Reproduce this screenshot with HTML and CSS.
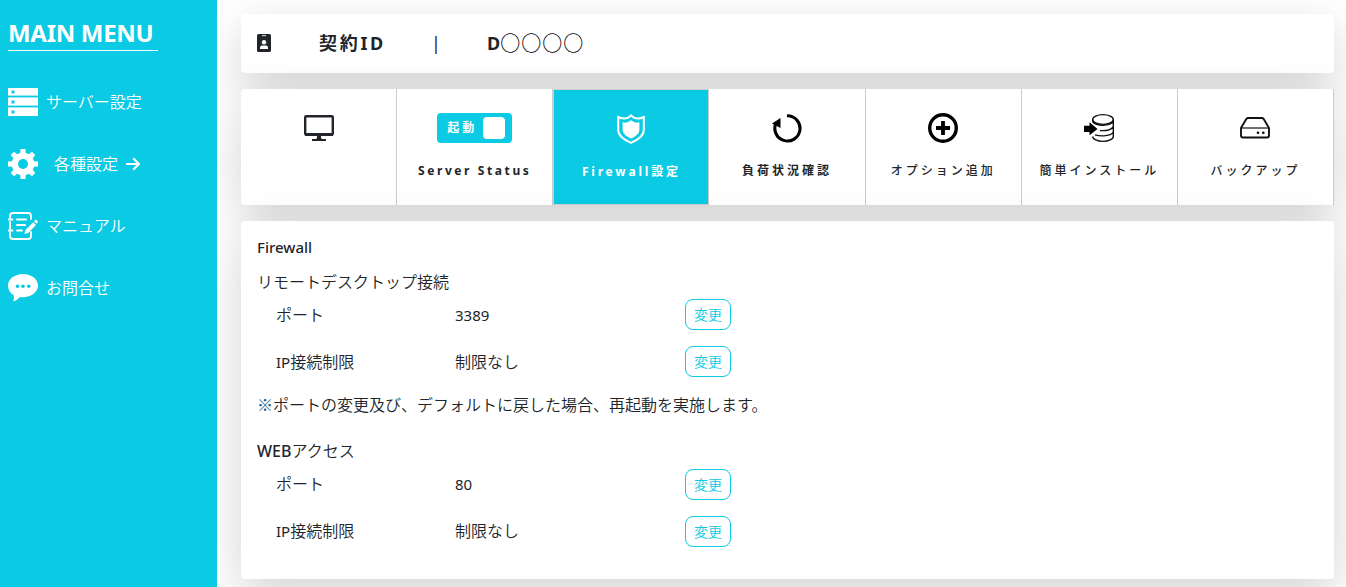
FILE: index.html
```html
<!DOCTYPE html>
<html lang="ja">
<head>
<meta charset="utf-8">
<title>Firewall設定</title>
<link rel="stylesheet" href="styles.css">
</head>
<body>
<div class="layout">
  <aside class="sidebar">
    <h1 class="menu-title">MAIN MENU</h1>
    <ul class="menu">
      <li class="menu-item">
        <svg class="menu-icon" viewBox="0 0 30 30"><path fill="#fff" d="M0 1h30v7H0zM0 11h30v7H0zM0 21h30v8H0z"/><path fill="#fff" opacity=".6" d="M0 8h30v1H0zM0 10h30v1H0zM0 18h30v1H0zM0 20h30v1H0z"/><path fill="#0acae4" d="M3.500 3.500h3v3h-3zM3.500 13.500h3v3h-3zM3.500 23.500h3v3h-3z"/></svg>
        <span class="menu-text">サーバー設定</span>
      </li>
      <li class="menu-item menu-item-wide">
        <svg class="menu-icon" viewBox="0 0 30 30"><g fill="#fff"><path d="M12.200 5 12.600 0h4.800l.4 5v20l-.4 5h-4.800l-.4-5z"/><path d="M12.200 5 12.600 0h4.800l.4 5v20l-.4 5h-4.800l-.4-5z" transform="rotate(45 15 15)"/><path d="M12.200 5 12.600 0h4.800l.4 5v20l-.4 5h-4.800l-.4-5z" transform="rotate(90 15 15)"/><path d="M12.200 5 12.600 0h4.800l.4 5v20l-.4 5h-4.800l-.4-5z" transform="rotate(135 15 15)"/><circle cx="15" cy="15" r="11.300"/></g><circle cx="15" cy="15" r="5" fill="#0acae4"/></svg>
        <span class="menu-text">各種設定</span>
        <svg class="menu-arrow" viewBox="0 0 14 14"><path d="M0 7h13M7.200 1.200 13 7l-5.800 5.800" fill="none" stroke="#fff" stroke-width="2.200"/></svg>
      </li>
      <li class="menu-item">
        <svg class="menu-icon" viewBox="0 0 30 30"><g fill="none" stroke="#fff" stroke-width="1.900" stroke-linecap="round"><path d="M2 6.500V5q0-3 3-3h15q3 0 3 3v3M2 11v6.500M2 21.500V25q0 3 3 3h15q3 0 3-3v-4M0.500 8.500h4M0.500 19.500h4M9 8.500h9M9 14h8M9 19.500h5"/></g><path fill="#fff" d="m17.500 19 7.700-7.700 2.800 2.800-7.800 7.800-3.900 1zM26 10.300l1.200-1.300q1-.5 2 .4t.4 2L28.500 12.700z"/></svg>
        <span class="menu-text">マニュアル</span>
      </li>
      <li class="menu-item">
        <svg class="menu-icon" viewBox="0 0 30 30"><path fill="#fff" d="M15 1c8.300 0 15 5 15 11.600S23.300 24.300 15 24.300c-1 0-2-.1-3-.2-2.200 2.400-4.500 3.800-6.800 4.400.8-2 .9-4 .4-6.200C2.200 20.200 0 16.800 0 12.600 0 6 6.700 1 15 1z"/><g fill="#0acae4"><circle cx="9.500" cy="13.300" r="1.800"/><circle cx="15" cy="13.300" r="1.800"/><circle cx="20.800" cy="13.300" r="1.800"/></g></svg>
        <span class="menu-text">お問合せ</span>
      </li>
    </ul>
  </aside>

  <main class="main">
    <header class="card contract">
      <svg class="badge-icon" viewBox="0 0 14 18"><rect width="14" height="18" rx="1.600" fill="#212529"/><path stroke="#fff" stroke-width=".9" d="M5 1.700h4"/><circle cx="7" cy="8.200" r="2.200" fill="#fff"/><path fill="#fff" d="M3 15v-1.300Q3 11.500 5 11.500h4q2 0 2 2.200V15z"/></svg>
      <span class="contract-label">契約ID</span>
      <span class="contract-sep">|</span>
      <span class="contract-id">D<span class="mask">○○○○</span></span>
    </header>

    <nav class="card tabs">
      <div class="tab">
        <svg class="tab-icon" viewBox="0 0 30 30"><rect x="1.200" y="3.200" width="27.600" height="18.400" rx="1" fill="none" stroke="#212529" stroke-width="2.400"/><path fill="#212529" d="M1 20h28v3H1zM13 22h4v3l1 1h4v2H8v-2h4l1-1z"/></svg>
      </div>
      <div class="tab">
        <div class="toggle"><span class="toggle-text">起動</span><span class="toggle-knob"></span></div>
        <span class="tab-label label-status">Server Status</span>
      </div>
      <div class="tab tab-active">
        <svg class="tab-icon shield" viewBox="0 0 30 30"><path fill="none" stroke="#fff" stroke-width="2" d="M15 1.300Q18 4.600 22 4.500q2.800 0 5.800-1.500v13q0 4-3.600 7.200Q20.500 26.500 15 28.900 9.500 26.500 5.800 23.200 2.200 20 2.200 16V3q3 1.500 5.800 1.500Q12 4.600 15 1.300z"/><path fill="#fff" d="M15 6.200q2.900 2.400 5.800 2.500 1.300 0 2.600-.4V16q0 2.700-2.600 4.900T15 24.600q-3.200-1.500-5.800-3.700T6.600 16V8.300q1.300.4 2.600.4Q12.100 8.600 15 6.200z"/></svg>
        <span class="tab-label label-firewall">Firewall設定</span>
      </div>
      <div class="tab">
        <svg class="tab-icon" viewBox="0 0 30 30"><path fill="none" stroke="#000" stroke-width="3.100" d="M15 2.800A12.600 12.600 0 1 1 4.300 9.500"/><path d="M0 10.500 8.500 5v10z"/></svg>
        <span class="tab-label">負荷状況確認</span>
      </div>
      <div class="tab">
        <svg class="tab-icon" viewBox="0 0 30 30"><circle cx="15" cy="15" r="13.300" fill="none" stroke="#000" stroke-width="3.400"/><path stroke="#000" stroke-width="3.800" d="M15 8v14M8 15h14"/></svg>
        <span class="tab-label label-kana">オプション追加</span>
      </div>
      <div class="tab">
        <svg class="tab-icon" viewBox="0 0 30 30"><g fill="none" stroke="#111" stroke-width="1.400"><ellipse cx="19" cy="6.500" rx="10.300" ry="4.900"/><path d="M29.300 6.500v17c0 2.700-4.600 4.900-10.300 4.900S8.700 26.200 8.700 23.500M8.700 6.500v2.200c1.600 2 5.600 3.500 10.300 3.500s9-1.500 10.300-4M16 17.600c7 .4 12-1.400 13.300-4M11 21.800c6 1.800 16 1.400 18.300-2.800"/></g><path d="M0 12.700h5.500V9.300l8 6.700-8 6.300V19H0z"/></svg>
        <span class="tab-label label-kana">簡単インストール</span>
      </div>
      <div class="tab">
        <svg class="tab-icon" viewBox="0 0 30 30"><g fill="none" stroke="#111" stroke-width="1.900" stroke-linejoin="round"><path d="M1 15 6.300 6Q7 5 8.300 5h13.400q1.300 0 2 1L29 15v7.500q0 2-2 2H3q-2 0-2-2z"/><path stroke-width="1.200" d="M1 15h28"/></g><circle cx="18" cy="19.700" r="1.300"/><circle cx="23.300" cy="19.700" r="1.300"/></svg>
        <span class="tab-label label-kana">バックアップ</span>
      </div>
    </nav>

    <section class="card content">
      <h2 class="heading heading-firewall">Firewall</h2>
      <h3 class="heading heading-sub">リモートデスクトップ接続</h3>
      <div class="row"><span>ポート</span><span class="num">3389</span><button class="change">変更</button></div>
      <div class="row"><span><span class="latin">IP</span>接続制限</span><span>制限なし</span><button class="change">変更</button></div>
      <p class="note"><span class="mark">※</span>ポートの変更及び、デフォルトに戻した場合、再起動を実施します。</p>
      <h3 class="heading heading-web"><span class="latin">WEB</span>アクセス</h3>
      <div class="row row-web"><span>ポート</span><span class="num">80</span><button class="change">変更</button></div>
      <div class="row row-web"><span><span class="latin">IP</span>接続制限</span><span>制限なし</span><button class="change">変更</button></div>
    </section>
  </main>
</div>
</body>
</html>
```
FILE: styles.css
```css
* { box-sizing: border-box; }

body {
  margin: 0;
  overflow: hidden;
  background: #fff;
  color: #212529;
  font-family: "Noto Sans", "Noto Sans CJK JP", sans-serif;
  font-size: 16px;
  line-height: 24px;
}

h1, h2, h3, p, ul { margin: 0; padding: 0; }

svg { display: block; flex: none; }

.layout { display: flex; height: 587px; }

.sidebar {
  position: relative;
  z-index: 1;
  flex: none;
  width: 217px;
  padding: 17px 8px;
  background: #0acae4;
  color: #fff;
}

.menu-title {
  width: 150px;
  height: 34px;
  border-bottom: 1px solid #fff;
  font-size: 24px;
  font-weight: 700;
  line-height: 32px;
  letter-spacing: -.3px;
  white-space: nowrap;
}

.menu {
  display: flex;
  flex-direction: column;
  gap: 32px;
  margin-top: 36px;
  list-style: none;
}

.menu-item {
  display: flex;
  align-items: center;
  gap: 8px;
  height: 30px;
  font-family: "Noto Sans CJK JP", sans-serif;
  font-weight: 350;
}

.menu-item-wide { gap: 16px; }
.menu-icon { width: 30px; height: 30px; }
.menu-text { padding-bottom: 2px; }
.menu-arrow { width: 14px; height: 14px; margin-left: -8px; }

.main {
  display: flex;
  flex: 1;
  flex-direction: column;
  gap: 16px;
  padding: 14px 12px 8px 24px;
}

.card {
  flex: none;
  border-radius: 4px;
  background: #fff;
  box-shadow: 0 16px 48px rgba(0, 0, 0, .175);
}

.contract {
  display: flex;
  align-items: center;
  height: 59px;
  padding: 0 16px;
  font-size: 18px;
  font-weight: 700;
  white-space: nowrap;
}

.badge-icon { width: 14px; height: 18px; margin-bottom: 1px; }
.contract-label, .contract-sep, .contract-id { padding-bottom: 2px; }
.contract-label { width: 112px; margin-left: 48px; letter-spacing: 2.700px; }
.contract-sep { width: 56px; font-weight: 400; }
.mask {
  color: #000;
  font-family: "Noto Sans CJK JP", sans-serif;
  font-size: 20px;
  font-weight: 500;
  line-height: 20px;
  letter-spacing: 1px;
  vertical-align: -1px;
}

.tabs {
  display: grid;
  grid-template-columns: repeat(7, 1fr);
  height: 116px;
}

.tab {
  display: flex;
  flex-direction: column;
  align-items: center;
  padding-top: 24px;
  border-right: 1px solid #ccc;
}

.tab-active {
  padding-top: 23px;
  border: 1px solid #ccc;
  background: #0acae4;
  color: #fff;
}

.tab-icon { width: 30px; height: 30px; }
.shield { margin-top: 1px; }

.tab-label {
  margin-top: 18px;
  font-size: 12px;
  font-weight: 700;
  line-height: 20px;
  letter-spacing: 3px;
  white-space: nowrap;
}

.label-status { letter-spacing: 2.600px; }
.label-firewall { letter-spacing: 2.800px; }
.label-kana { font-weight: 500; }

.toggle {
  display: flex;
  align-items: center;
  justify-content: space-between;
  width: 75px;
  height: 30px;
  padding: 0 7px 0 10px;
  border-radius: 4px;
  background: #0acae4;
  color: #fff;
}

.toggle-text { font-size: 12px; font-weight: 700; letter-spacing: 3px; }
.toggle-knob { width: 22px; height: 22px; border-radius: 4px; background: #fff; }

.content {
  height: 358px;
  padding: 14px 16px;
  font-weight: 350;
}

.heading { font-size: 16px; font-weight: 350; line-height: 24px; }
.heading-firewall { font-size: 15px; font-weight: 500; }
.heading-sub { margin: 11px 0 5px; }
.heading-web { margin: 22px 0 6px; }
.heading-web .latin { font-size: 16px; font-weight: 500; }

.latin, .num { font-size: 15px; font-weight: 400; }

.row {
  display: grid;
  grid-template-columns: 179px 230px 46px;
  align-items: center;
  height: 31px;
  margin-bottom: 16px;
  padding-left: 19px;
}

.row-web > span { padding-bottom: 2px; }

.note { margin-top: -1px; white-space: nowrap; }
.mark { color: #0b5a94; font-family: "Noto Sans CJK JP", sans-serif; }

.change {
  height: 31px;
  padding: 0;
  border: 1px solid #0acae4;
  border-radius: 8px;
  background: #fff;
  color: #0acae4;
  font: 350 14px/21px "Noto Sans CJK JP", sans-serif;
}
```
